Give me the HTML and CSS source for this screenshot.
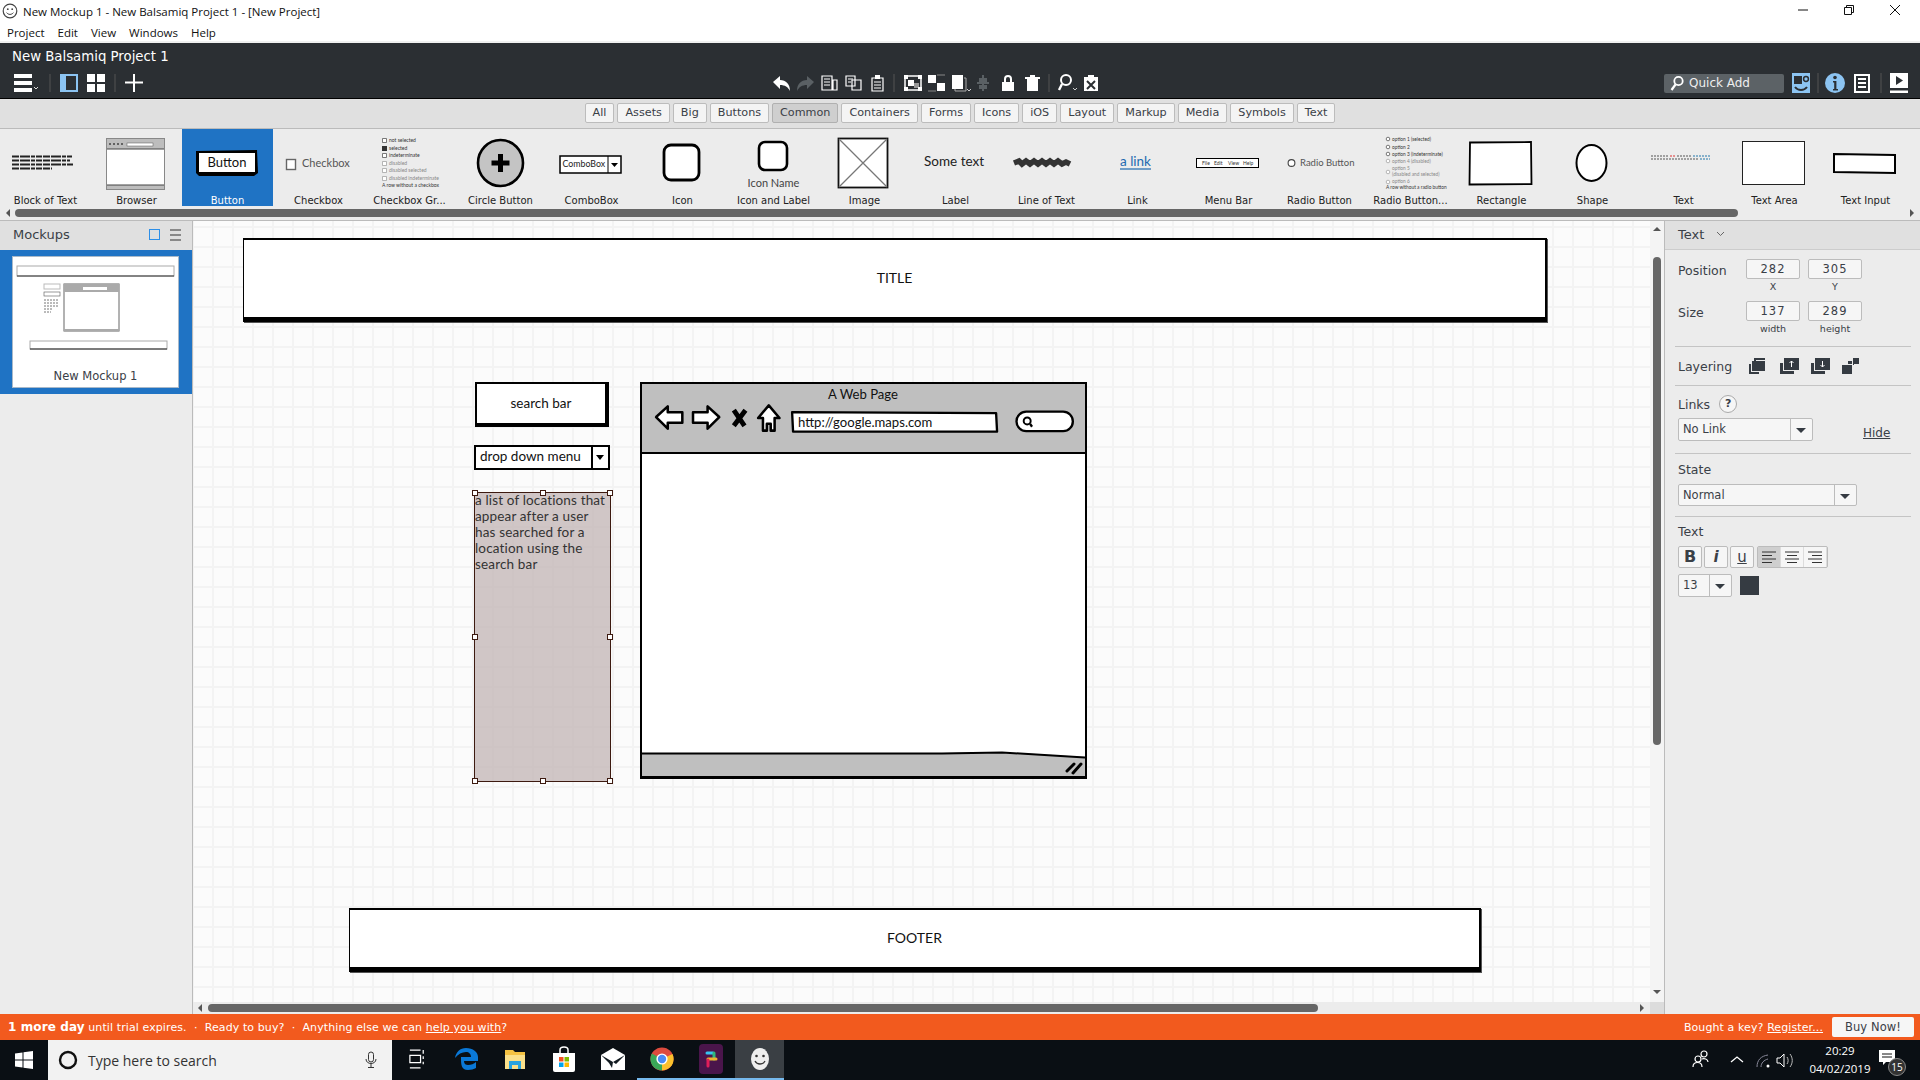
FILE: index.html
```html
<!DOCTYPE html>
<html lang="en">
<head>
    <meta charset="UTF-8">
    <meta name="viewport" content="width=device-width, initial-scale=1.0">
    <title>New Mockup 1 - New Balsamiq Project 1 - [New Project]</title>
    <link rel="stylesheet" href="styles.css">
</head>
<body>
<div class="app">

    <!-- Window title -->
    <div class="titlebar">
        <svg class="app-icon" width="16" height="16" viewBox="0 0 16 16"><circle cx="8" cy="8" r="6.8" fill="#fff" stroke="#444" stroke-width="1.2"/><circle cx="5.8" cy="6.2" r=".9" fill="#444"/><circle cx="10.2" cy="6.2" r=".9" fill="#444"/><path d="M4.6 9.6c1.6 2.4 5.2 2.4 6.8 0" fill="none" stroke="#444"/></svg>
        <span class="window-title">New Mockup 1 - New Balsamiq Project 1 - [New Project]</span>
        <div class="window-controls">
            <svg width="12" height="12" viewBox="0 0 12 12"><path d="M1 6h10" stroke="#111"/></svg>
            <svg width="12" height="12" viewBox="0 0 12 12"><path d="M1.5 3.5h7v7h-7zM3.5 3.5v-2h7v7h-2" fill="none" stroke="#111"/></svg>
            <svg width="12" height="12" viewBox="0 0 12 12"><path d="M1 1l10 10M11 1L1 11" stroke="#111"/></svg>
        </div>
    </div>
    <div class="menubar">
        <span>Project</span><span>Edit</span><span>View</span><span>Windows</span><span>Help</span>
    </div>

    <!-- Dark header -->
    <div class="header">
        <div class="project-name">New Balsamiq Project 1</div>
        <div class="toolbar">
            <svg class="tb-left" width="758" height="22" viewBox="0 0 758 22">
                <path d="M0 2h18v4H0zM0 9h18v4H0zM0 16h18v4H0z" fill="#fff"/>
                <path d="M20 15l2 2 2-2" fill="none" stroke="#ddd"/>
                <path d="M36 2v18" stroke="#555"/>
                <path d="M46 2h18v18H46z" fill="#8cc4f2"/><path d="M52 4h10v14H52z" fill="#2b2f33"/>
                <path d="M73 2h8v8h-8zM83 2h8v8h-8zM73 12h8v8h-8zM83 12h8v8h-8z" fill="#fff"/>
                <path d="M101 2v18" stroke="#555"/>
                <path d="M111 10.5h18M120 2v18" stroke="#fff" stroke-width="2"/>
            </svg>
            <svg class="tb-center" width="330" height="22" viewBox="0 0 330 22">
                <path d="M3 10l7-6v4c6 0 10 4 10 11-2-4-5-6-10-6v4z" fill="#fff"/>
                <path d="M44 10l-7-6v4c-6 0-10 4-10 11 2-4 5-6 10-6v4z" fill="#5a6064"/>
                <path d="M52 4h10v14H52zM63 8h4v10h-4z" fill="none" stroke="#fff" stroke-width="1.2"/><path d="M54 7h6M54 10h6M54 13h6" stroke="#fff"/>
                <path d="M76 4h9v10h-9zM82 8h9v10h-9z" fill="none" stroke="#fff" stroke-width="1.2"/><path d="M78 7h5M78 10h3" stroke="#fff"/>
                <path d="M102 6h11v13h-11z" fill="none" stroke="#fff" stroke-width="1.2"/><path d="M105 3h5v4h-5z" fill="#fff"/><path d="M104 10h7M104 13h7M104 16h7" stroke="#fff"/>
                <path d="M124 2v18" stroke="#555"/>
                <path d="M135 4h16v14h-16z" fill="none" stroke="#fff" stroke-width="1.5"/><path d="M138 8h6v6h-6z" fill="#fff"/><path d="M144 11h5v5h-5z" fill="#999"/>
                <path d="M134 3h4v4h-4zM148 3h4v4h-4zM134 15h4v4h-4zM148 15h4v4h-4z" fill="#fff"/>
                <path d="M158 3h8v8h-8zM167 11h8v8h-8z" fill="#fff"/><path d="M167 3h8M158 19h8" stroke="#888"/>
                <path d="M182 3h11v14h-11z" fill="#fff"/><path d="M194 6h2v13h-11v-2" fill="none" stroke="#aaa"/><path d="M197 17l2 2 2-2" fill="none" stroke="#ccc"/>
                <path d="M207 11h12M213 3v16" stroke="#5a6064" stroke-width="2"/><path d="M209 6h8v4h-8zM209 13h8v4h-8z" fill="#5a6064"/>
                <path d="M232 10h12v9h-12z" fill="#fff"/><path d="M235 10V7c0-4 6-4 6 0v3" fill="none" stroke="#fff" stroke-width="2"/>
                <path d="M257 7h11v12h-11zM255 5h15v2h-15zM260 3h5v2h-5z" fill="#fff"/>
                <path d="M279 2v18" stroke="#555"/>
                <circle cx="296" cy="8" r="5" fill="none" stroke="#fff" stroke-width="2"/><path d="M292 12l-3 6" stroke="#fff" stroke-width="2.4"/><path d="M303 16l2 2 2-2" fill="none" stroke="#ccc"/>
                <path d="M314 5h14v14h-14z" fill="#fff"/><path d="M318 3h6v3h-6z" fill="#fff"/><path d="M317 9l8 8M325 9l-8 8" stroke="#2b2f33" stroke-width="2"/>
            </svg>
            <div class="tb-right">
                <div class="quick-add">
                    <svg width="14" height="16" viewBox="0 0 14 16"><circle cx="8.5" cy="6" r="4.2" fill="none" stroke="#fff" stroke-width="1.8"/><path d="M5.5 9.5L1.5 15" stroke="#fff" stroke-width="2.2"/></svg>
                    <span>Quick Add</span>
                </div>
                <svg width="126" height="22" viewBox="0 0 126 22">
                    <path d="M0 1h18v20H0z" fill="#8cc4f2"/><path d="M2 4h8v8H2z" fill="#2b2f33"/><circle cx="14" cy="7" r="2.4" fill="none" stroke="#2b2f33" stroke-width="1.5"/><path d="M3 15c3 4 9 4 12 0" fill="none" stroke="#2b2f33" stroke-width="2"/>
                    <path d="M26 1v20" stroke="#555"/>
                    <circle cx="43" cy="11" r="10" fill="#8cc4f2"/><circle cx="43" cy="5.5" r="1.8" fill="#2b2f33"/><path d="M41 9h3.4v8H46v1.4h-5V17h1.2v-6.6H41z" fill="#2b2f33"/>
                    <path d="M63 3h14v17H63z" fill="none" stroke="#fff" stroke-width="2"/><path d="M66 7h8M66 11h8M66 15h8" stroke="#fff" stroke-width="2"/>
                    <path d="M89 1v20" stroke="#555"/>
                    <path d="M98 1h18v15H98z" fill="#fff"/><path d="M104 4l7 4.5-7 4.5z" fill="#2b2f33"/><path d="M98 18.5h18v2.5H98z" fill="#fff"/>
                </svg>
            </div>
        </div>
    </div>

    <!-- Library filter -->
    <div class="filterbar">
        <span class="tab">All</span>
        <span class="tab">Assets</span>
        <span class="tab">Big</span>
        <span class="tab">Buttons</span>
        <span class="tab tab-active">Common</span>
        <span class="tab">Containers</span>
        <span class="tab">Forms</span>
        <span class="tab">Icons</span>
        <span class="tab">iOS</span>
        <span class="tab">Layout</span>
        <span class="tab">Markup</span>
        <span class="tab">Media</span>
        <span class="tab">Symbols</span>
        <span class="tab">Text</span>
    </div>

    <!-- Control library -->
    <div class="palette">
        <div class="palette-row">
            <div class="palette-item">
                <svg class="thumb" viewBox="0 0 91 60"><path d="M12 25.5h60M12 29.5h58M12 33.5h61M12 37.5h40" stroke="#222" stroke-width="1.8" stroke-dasharray="7 1 10 1 4 1 6 1"/></svg>
                <div class="palette-label">Block of Text</div>
            </div>
            <div class="palette-item">
                <svg class="thumb" viewBox="0 0 91 60"><rect x="15.5" y="7.5" width="58" height="51" fill="#fff" stroke="#888"/><rect x="16" y="8" width="57" height="10" fill="#bdbdbd"/><rect x="36" y="12" width="26" height="3" fill="#fff" stroke="#555" stroke-width=".5"/><path d="M18 13h2M22 13h2M26 13h2M30 13h2" stroke="#444" stroke-width="1.4"/><rect x="16" y="54" width="57" height="4" fill="#bdbdbd"/><path d="M16 18h57M16 54h57" stroke="#444"/></svg>
                <div class="palette-label">Browser</div>
            </div>
            <div class="palette-item palette-selected">
                <svg class="thumb" viewBox="0 0 91 60"><path d="M14 20l61-1 1 23-4 3-55 0-3-3z" fill="#000"/><rect x="17" y="22" width="56" height="19" fill="#fff"/><text x="45" y="36" class="sk" font-size="13" text-anchor="middle" fill="#111">Button</text></svg>
                <div class="palette-label">Button</div>
            </div>
            <div class="palette-item">
                <svg class="thumb" viewBox="0 0 91 60"><rect x="13.5" y="28.5" width="9" height="10" fill="#fff" stroke="#666" stroke-width="1.4"/><text x="29" y="36" class="sk" font-size="11" fill="#555">Checkbox</text></svg>
                <div class="palette-label">Checkbox</div>
            </div>
            <div class="palette-item">
                <svg class="thumb" viewBox="0 0 91 60">
                    <g class="sk" font-size="5" fill="#333"><text x="25" y="11">not selected</text><text x="25" y="19">selected</text><text x="25" y="26">indeterminate</text></g>
                    <g class="sk" font-size="5" fill="#888"><text x="25" y="34">disabled</text><text x="25" y="41">disabled selected</text><text x="25" y="49">disabled indeterminate</text></g>
                    <text x="18" y="56" class="sk" font-size="5" fill="#333">A row without a checkbox</text>
                    <path d="M18.5 7.5h4v4h-4zM18.5 22.5h4v4h-4z" fill="#fff" stroke="#444" stroke-width=".7"/><path d="M18 15h5v5h-5z" fill="#333"/><path d="M18.5 30.5h4v4h-4zM18.5 37.5h4v4h-4zM18.5 45.5h4v4h-4z" fill="#fff" stroke="#999" stroke-width=".7"/>
                </svg>
                <div class="palette-label">Checkbox Gr...</div>
            </div>
            <div class="palette-item">
                <svg class="thumb" viewBox="0 0 91 60"><ellipse cx="45.5" cy="32" rx="22.5" ry="23" fill="#c4c4c4" stroke="#000" stroke-width="2.6"/><path d="M45.5 23v18M36.5 32h18" stroke="#000" stroke-width="5"/></svg>
                <div class="palette-label">Circle Button</div>
            </div>
            <div class="palette-item">
                <svg class="thumb" viewBox="0 0 91 60"><rect x="14" y="25" width="61" height="17" fill="#fff" stroke="#000" stroke-width="1.5"/><path d="M62 25v17" stroke="#000"/><path d="M65 32h7l-3.5 4z" fill="#000"/><text x="16.5" y="36" class="sk" font-size="8.8" fill="#222">ComboBox</text></svg>
                <div class="palette-label">ComboBox</div>
            </div>
            <div class="palette-item">
                <svg class="thumb" viewBox="0 0 91 60"><rect x="27" y="14" width="35" height="35" rx="7" fill="#fff" stroke="#000" stroke-width="2.8"/></svg>
                <div class="palette-label">Icon</div>
            </div>
            <div class="palette-item">
                <svg class="thumb" viewBox="0 0 91 60"><rect x="31" y="11" width="28" height="28" rx="6" fill="#fff" stroke="#000" stroke-width="2.6"/><text x="45.5" y="56" class="sk" font-size="11" text-anchor="middle" fill="#444">Icon Name</text></svg>
                <div class="palette-label">Icon and Label</div>
            </div>
            <div class="palette-item">
                <svg class="thumb" viewBox="0 0 91 60"><rect x="19.5" y="7.5" width="49" height="49" fill="#fff" stroke="#111" stroke-width="1.8"/><path d="M20 8l48 48M68 8L20 56" stroke="#777" stroke-width="1.3"/></svg>
                <div class="palette-label">Image</div>
            </div>
            <div class="palette-item">
                <svg class="thumb" viewBox="0 0 91 60"><text x="14" y="35" class="sk" font-size="13.5" fill="#222">Some text</text></svg>
                <div class="palette-label">Label</div>
            </div>
            <div class="palette-item">
                <svg class="thumb" viewBox="0 0 91 60"><path d="M13 32l5-2 3 3 4-3 4 3 4-3 4 3 4-3 4 3 4-3 4 3 4-3 4 3 4-2 4 2" fill="none" stroke="#333" stroke-width="5.5"/></svg>
                <div class="palette-label">Line of Text</div>
            </div>
            <div class="palette-item">
                <svg class="thumb" viewBox="0 0 91 60"><text x="28" y="35" class="sk" font-size="13.5" fill="#1f6ab0">a link</text><path d="M28 38h31" stroke="#1f6ab0" stroke-width="1.2"/></svg>
                <div class="palette-label">Link</div>
            </div>
            <div class="palette-item">
                <svg class="thumb" viewBox="0 0 91 60"><rect x="13.5" y="27.5" width="62" height="9" fill="#fff" stroke="#000"/><g class="sk" font-size="5" fill="#333"><text x="19" y="34">File</text><text x="31" y="34">Edit</text><text x="45" y="34">View</text><text x="60" y="34">Help</text></g></svg>
                <div class="palette-label">Menu Bar</div>
            </div>
            <div class="palette-item">
                <svg class="thumb" viewBox="0 0 91 60"><circle cx="17.5" cy="32" r="3.4" fill="#fff" stroke="#444" stroke-width="1.1"/><text x="26" y="35" class="sk" font-size="9.5" fill="#555">Radio Button</text></svg>
                <div class="palette-label">Radio Button</div>
            </div>
            <div class="palette-item">
                <svg class="thumb" viewBox="0 0 91 60">
                    <g class="sk" font-size="4.8" fill="#333"><text x="27" y="10">option 1 (selected)</text><text x="27" y="18">option 2</text><text x="27" y="25">option 3 (indeterminate)</text></g>
                    <g class="sk" font-size="4.8" fill="#888"><text x="27" y="32">option 4 (disabled)</text><text x="27" y="39">option 5</text><text x="27" y="45">(disabled and selected)</text><text x="27" y="52">option 6</text></g>
                    <text x="21" y="58" class="sk" font-size="4.8" fill="#333">A row without a radio button</text>
                    <g fill="#fff" stroke="#444" stroke-width=".7"><circle cx="23" cy="8" r="1.8"/><circle cx="23" cy="16" r="1.8"/><circle cx="23" cy="23" r="1.8"/></g><g fill="#fff" stroke="#999" stroke-width=".7"><circle cx="23" cy="30" r="1.8"/><circle cx="23" cy="41" r="1.8"/><circle cx="23" cy="51" r="1.8"/></g>
                </svg>
                <div class="palette-label">Radio Button...</div>
            </div>
            <div class="palette-item">
                <svg class="thumb" viewBox="0 0 91 60"><path d="M14 11.5l61-.5 .5 42-62 .5z" fill="#fff" stroke="#000" stroke-width="1.8"/></svg>
                <div class="palette-label">Rectangle</div>
            </div>
            <div class="palette-item">
                <svg class="thumb" viewBox="0 0 91 60"><ellipse cx="44.5" cy="32" rx="15" ry="18" fill="#fff" stroke="#000" stroke-width="2"/></svg>
                <div class="palette-label">Shape</div>
            </div>
            <div class="palette-item">
                <svg class="thumb" viewBox="0 0 91 60"><path d="M13 25h17" stroke="#555" stroke-dasharray="2 1"/><path d="M32 25h5" stroke="#d33" stroke-dasharray="2 1"/><path d="M39 25h14" stroke="#555" stroke-dasharray="2 1"/><path d="M55 25h18" stroke="#27a" stroke-dasharray="2 1"/><path d="M13 28h47" stroke="#555" stroke-dasharray="2 1"/><path d="M62 28h10" stroke="#27a" stroke-dasharray="2 1"/></svg>
                <div class="palette-label">Text</div>
            </div>
            <div class="palette-item">
                <svg class="thumb" viewBox="0 0 91 60"><rect x="13.5" y="10.5" width="62" height="43" fill="#fff" stroke="#222"/></svg>
                <div class="palette-label">Text Area</div>
            </div>
            <div class="palette-item">
                <svg class="thumb" viewBox="0 0 91 60"><path d="M14 23l61 1 0 18-61-1z" fill="#fff" stroke="#000" stroke-width="2"/></svg>
                <div class="palette-label">Text Input</div>
            </div>
        </div>
        <div class="palette-scroll">
            <i class="arrow-left"></i>
            <div class="palette-thumb"></div>
            <i class="arrow-right"></i>
        </div>
    </div>

    <!-- Main area -->
    <div class="main">
        <div class="left-panel">
            <div class="panel-head">
                <span>Mockups</span>
                <svg width="33" height="12" viewBox="0 0 33 12"><rect x=".5" y=".5" width="10" height="10" fill="none" stroke="#2d8fe8"/><path d="M21 1h11M21 6h11M21 11h11" stroke="#333"/></svg>
            </div>
            <div class="mockup-item">
                <div class="mockup-card">
                    <svg width="165" height="108" viewBox="0 0 165 108">
                        <rect x="4" y="9" width="157" height="10" fill="#fff" stroke="#aaa"/><path d="M4 19h157" stroke="#333"/>
                        <rect x="31" y="27" width="16" height="5" fill="#fff" stroke="#bbb"/><rect x="31" y="35" width="16" height="4" fill="#fff" stroke="#555" stroke-width=".6"/>
                        <path d="M31 43h15M31 46h15M31 49h15M31 52h9M31 55h7" stroke="#777" stroke-dasharray="2 1"/>
                        <rect x="51" y="27" width="55" height="47" fill="#fff" stroke="#666"/><rect x="51" y="27" width="55" height="8" fill="#aaa"/><rect x="70" y="30" width="24" height="3" fill="#fff"/><rect x="51" y="72" width="55" height="2" fill="#aaa"/>
                        <rect x="17" y="84" width="137" height="8" fill="#fff" stroke="#aaa"/><path d="M17 92h137" stroke="#222"/>
                    </svg>
                    <div class="mockup-name">New Mockup 1</div>
                </div>
            </div>
        </div>

        <div class="center">
            <div class="center-top">
                <div class="canvas">
                    <div class="wf-box wf-title">TITLE</div>
                    <div class="wf-button">search bar</div>
                    <div class="wf-combo">
                        <span class="wf-combo-text">drop down menu</span>
                        <span class="wf-combo-arrow"></span>
                    </div>
                    <div class="wf-selected">
                        <div class="wf-selected-text">a list of locations that<br>appear after a user<br>has searched for a<br>location using the<br>search bar</div>
                        <i class="handle h-tl"></i><i class="handle h-tc"></i><i class="handle h-tr"></i>
                        <i class="handle h-ml"></i><i class="handle h-mr"></i>
                        <i class="handle h-bl"></i><i class="handle h-bc"></i><i class="handle h-br"></i>
                    </div>
                    <div class="wf-browser">
                        <svg class="wf-browser-head" width="443" height="70" viewBox="0 0 443 70">
                            <g transform="translate(0 1)">
                                <text x="221" y="14" class="sk" font-size="13.5" text-anchor="middle" fill="#111">A Web Page</text>
                                <g fill="#fff" stroke="#000" stroke-width="2.6" stroke-linejoin="round">
                                    <path d="M8 33l12-11v6h15v11H20v6z"/>
                                    <path d="M73 33L61 22v6H46v11h15v6z"/>
                                    <path d="M124 21l11 13h-5v13h-4v-7h-4v7h-4V34h-5z"/>
                                </g>
                                <path d="M88 26l11 16M100 26L88 42" stroke="#000" stroke-width="5"/>
                                <path d="M148 28l210 1 1 19-210 0z" fill="#fff" stroke="#000" stroke-width="2.4" stroke-linejoin="round"/>
                                <text x="154" y="43" class="sk" font-size="13.5" fill="#111">http://google.maps.com</text>
                                <rect x="379" y="27.5" width="58" height="20" rx="10" fill="#fff" stroke="#000" stroke-width="2.4"/>
                                <circle cx="390" cy="37" r="3.6" fill="none" stroke="#000" stroke-width="2"/><path d="M393 40l2 3" stroke="#000" stroke-width="2.4"/>
                            </g>
                        </svg>
                        <div class="wf-browser-body"></div>
                        <svg class="wf-browser-foot" width="443" height="23" viewBox="0 0 443 23">
                            <path d="M0 0l300 0 60-1 83 5v19H0z" fill="#bfbfbf"/>
                            <path d="M0 .5l300 0 60-1 83 5" fill="none" stroke="#000" stroke-width="2"/>
                            <path d="M425 18l7-7M431 20l8-9" stroke="#000" stroke-width="3" stroke-linecap="round"/>
                        </svg>
                    </div>
                    <div class="wf-box wf-footer">FOOTER</div>
                </div>
                <div class="vscroll">
                    <i class="arrow-up"></i>
                    <div class="vscroll-thumb"></div>
                    <i class="arrow-down"></i>
                </div>
            </div>
            <div class="hscroll">
                <i class="arrow-left"></i>
                <div class="hscroll-thumb"></div>
                <i class="arrow-right"></i>
                <div class="hscroll-corner"></div>
            </div>
        </div>

        <!-- Properties -->
        <div class="right-panel">
            <div class="panel-head prop-head">
                <span>Text</span>
                <svg width="9" height="6" viewBox="0 0 9 6"><path d="M1 1l3.5 3.5L8 1" fill="none" stroke="#666"/></svg>
            </div>
            <div class="prop-section prop-geometry">
                <span class="prop-label">Position</span>
                <span class="num-input">282</span>
                <span class="num-input">305</span>
                <span></span><span class="sub-label">X</span><span class="sub-label">Y</span>
                <span class="prop-label">Size</span>
                <span class="num-input">137</span>
                <span class="num-input">289</span>
                <span></span><span class="sub-label">width</span><span class="sub-label">height</span>
            </div>
            <div class="prop-section prop-layering">
                <span class="prop-label layering-label">Layering</span>
                <svg width="110" height="16" viewBox="0 0 110 16">
                    <path d="M3 3h13v10H3z" fill="#353b42"/><path d="M5 0h11v2H7v1H5zM0 6h2v8h8v2H0z" fill="#353b42"/>
                    <path d="M35 0h15v12H35z" fill="#353b42"/><path d="M31 5h3v8h11v3H31z" fill="#353b42"/><path d="M42.5 3v6M40.5 5l2-2 2 2" fill="none" stroke="#fff"/>
                    <path d="M66 0h15v12H66z" fill="#353b42"/><path d="M62 5h3v8h11v3H62z" fill="#353b42"/><path d="M73.5 3v6M71.5 7l2 2 2-2" fill="none" stroke="#fff"/>
                    <path d="M93 7h10v9H93z" fill="#353b42"/><path d="M104 0h6v6h-5v1h-1zM99 3h4v3h-4z" fill="#353b42"/>
                </svg>
            </div>
            <div class="prop-section prop-links">
                <div class="links-head">
                    <span class="prop-label">Links</span>
                    <span class="help">?</span>
                </div>
                <div class="links-row">
                    <div class="select select-link"><span class="select-text">No Link</span><span class="select-arrow"></span></div>
                    <span class="hide-link">Hide</span>
                </div>
            </div>
            <div class="prop-section prop-state">
                <div class="prop-label prop-title">State</div>
                <div class="select select-state"><span class="select-text">Normal</span><span class="select-arrow"></span></div>
            </div>
            <div class="prop-section prop-text">
                <div class="prop-label prop-title">Text</div>
                <div class="format-row">
                    <span class="format-btn fmt-b">B</span>
                    <span class="format-btn fmt-i">i</span>
                    <span class="format-btn fmt-u">u</span>
                    <div class="align-group">
                        <span class="align-btn align-on"><svg width="16" height="13" viewBox="0 0 16 13"><path d="M1 1h14M1 4.5h10M1 8h14M1 11.5h10" stroke="#333"/></svg></span>
                        <span class="align-btn"><svg width="16" height="13" viewBox="0 0 16 13"><path d="M1 1h14M3 4.5h10M1 8h14M3 11.5h10" stroke="#333"/></svg></span>
                        <span class="align-btn"><svg width="16" height="13" viewBox="0 0 16 13"><path d="M1 1h14M5 4.5h10M1 8h14M5 11.5h10" stroke="#333"/></svg></span>
                    </div>
                </div>
                <div class="font-row">
                    <div class="select select-size"><span class="select-text">13</span><span class="select-arrow"></span></div>
                    <span class="swatch"></span>
                </div>
            </div>
        </div>
    </div>

    <!-- Trial notice -->
    <div class="trialbar">
        <div class="trial-text"><b>1 more day</b> until trial expires. &nbsp;&middot;&nbsp; Ready to buy? &nbsp;&middot;&nbsp; Anything else we can <u>help you with</u>?</div>
        <div class="trial-right">
            <span>Bought a key? <u>Register...</u></span>
            <span class="buy-btn">Buy Now!</span>
        </div>
    </div>

    <!-- Windows taskbar -->
    <div class="taskbar">
        <div class="start">
            <svg width="18" height="18" viewBox="0 0 18 18"><path d="M0 2.5l7.5-1v7H0zM8.5 1.3L18 0v8.5H8.5zM0 9.5h7.5v7l-7.5-1zM8.5 9.5H18V18l-9.5-1.3z" fill="#fff"/></svg>
        </div>
        <div class="search-box">
            <svg width="20" height="20" viewBox="0 0 20 20"><circle cx="10" cy="10" r="8" fill="none" stroke="#111" stroke-width="2.4"/></svg>
            <span class="search-text">Type here to search</span>
            <svg class="mic" width="12" height="18" viewBox="0 0 12 18"><rect x="3.5" y="1" width="5" height="10" rx="2.5" fill="none" stroke="#333"/><path d="M1 8c0 6 10 6 10 0M6 13v3M3 16.5h6" fill="none" stroke="#333"/></svg>
        </div>
        <div class="task-icon">
            <svg width="16" height="20" viewBox="0 0 18 22"><path d="M1 1h12M1 21h12M1 7h12v8H1zM16 1v4M16 8v3M16 14v3" fill="none" stroke="#fff" stroke-width="1.4"/></svg>
        </div>
        <div class="task-icon">
            <svg width="24" height="24" viewBox="0 0 24 24"><path d="M12 1C6 1 2 5 1 11c3-4 7-6 11-6 3 0 5 2 5 5H7c0 7 0 13 7 13 3 0 6-1 8-2v-6c-2 2-5 3-8 3-2 0-4-1-4-4h14v-4C24 5 19 1 12 1z" fill="#0a78d7"/></svg>
        </div>
        <div class="task-icon">
            <svg width="24" height="24" viewBox="0 0 24 24"><path d="M2 3h8l2 2h10v17H2z" fill="#f5c242"/><path d="M2 8h20v14H2z" fill="#fbe08a"/><path d="M6 14h12v8h-3v-4H9v4H6z" fill="#29a3e0"/></svg>
        </div>
        <div class="task-icon">
            <svg width="24" height="26" viewBox="0 0 24 26"><path d="M8 7V4c0-4 8-4 8 0v3" fill="none" stroke="#fff" stroke-width="1.5"/><path d="M1 7h22v17a2 2 0 0 1-2 2H3a2 2 0 0 1-2-2z" fill="#fff"/><path d="M7 11h4.5v4.5H7z" fill="#f25022"/><path d="M12.5 11H17v4.5h-4.5z" fill="#7fba00"/><path d="M7 16.5h4.5V21H7z" fill="#00a4ef"/><path d="M12.5 16.5H17V21h-4.5z" fill="#ffb900"/></svg>
        </div>
        <div class="task-icon">
            <svg width="24" height="22" viewBox="0 0 24 22"><path d="M0 7L12 0l12 7v15H0z" fill="#fff"/><path d="M0 7l12 7L24 7l-9 9-3-2-1 6-3-5z" fill="#111a20"/></svg>
        </div>
        <div class="task-icon task-open">
            <svg width="24" height="24" viewBox="0 0 24 24"><circle cx="12" cy="12" r="11.5" fill="#dd4b3e"/><path d="M12 12L22.5 7A11.5 11.5 0 0 1 12 23.5z" fill="#fbc02d"/><path d="M12 12L12 23.5A11.5 11.5 0 0 1 1.8 6.5z" fill="#3aa757"/><circle cx="12" cy="12" r="5.6" fill="#fff"/><circle cx="12" cy="12" r="4.2" fill="#4a8bf5"/></svg>
        </div>
        <div class="task-icon task-open">
            <svg width="24" height="30" viewBox="0 0 24 30"><rect width="24" height="30" rx="4" fill="#4a154b"/><path d="M8 9h6" stroke="#36c5f0" stroke-width="3" stroke-linecap="round"/><path d="M15 9v6" stroke="#2eb67d" stroke-width="3" stroke-linecap="round"/><path d="M9 15h8" stroke="#ecb22e" stroke-width="3" stroke-linecap="round"/><path d="M9 16v6" stroke="#e01e5a" stroke-width="3" stroke-linecap="round"/></svg>
        </div>
        <div class="task-icon task-open task-active">
            <svg width="20" height="24" viewBox="0 0 20 24"><ellipse cx="10" cy="12" rx="9" ry="11" fill="#eee"/><circle cx="6.5" cy="9" r="1.3" fill="#333"/><circle cx="13.5" cy="9" r="1.3" fill="#333"/><path d="M5 14c2 4 8 4 10 0" fill="none" stroke="#333" stroke-width="1.3"/></svg>
        </div>
        <div class="tray">
            <svg width="104" height="20" viewBox="0 0 104 20">
                <circle cx="6" cy="9" r="3" fill="none" stroke="#fff" stroke-width="1.2"/><circle cx="12" cy="4" r="3" fill="none" stroke="#fff" stroke-width="1.2"/><path d="M1 17c0-6 9-6 9 0M10 9c2-1 6 0 6 3" fill="none" stroke="#fff" stroke-width="1.2"/>
                <path d="M39 12l6-5 6 5" fill="none" stroke="#fff" stroke-width="1.3"/>
                <path d="M65 17c0-7 4-11 11-12M69 17c0-4 3-7 7-8" fill="none" stroke="#889" /><circle cx="76" cy="16" r="1.5" fill="#fff"/>
                <path d="M85 8h3l4-4v13l-4-4h-3z" fill="none" stroke="#fff"/><path d="M95 7c1.5 2 1.5 5 0 7M98 4c3 4 3 9 0 13" fill="none" stroke="#bbb"/>
            </svg>
            <div class="clock"><div>20:29</div><div>04/02/2019</div></div>
            <div class="notify">
                <svg width="18" height="16" viewBox="0 0 18 16"><path d="M1 1h16v12H8l-3 3v-3H1z" fill="#fff"/><path d="M4 5h10M4 8h10" stroke="#111"/></svg>
                <span class="notify-badge">15</span>
            </div>
        </div>
    </div>
</div>
</body>
</html>
```

FILE: styles.css
```css
* {
    box-sizing: border-box;
}
body {
    margin: 0;
    font-family: "DejaVu Sans", sans-serif;
    color: #3a4047;
    background: #ececec;
    overflow: hidden;
}
.sk {
    font-family: "Lato", sans-serif;
}
.app {
    width: 1920px;
    height: 1080px;
    display: flex;
    flex-direction: column;
    overflow: hidden;
}

/* window chrome */
.titlebar {
    height: 22px;
    display: flex;
    align-items: center;
    background: #fff;
    padding-left: 2px;
    font-family: "Open Sans", sans-serif;
    font-size: 11.5px;
    color: #111;
}
.window-title {
    margin-left: 5px;
}
.window-controls {
    margin-left: auto;
    display: flex;
    gap: 34px;
    padding-right: 19px;
    margin-top: -3px;
}
.menubar {
    height: 21px;
    display: flex;
    align-items: center;
    gap: 13px;
    padding: 2px 0 0 7px;
    background: #fff;
    font-family: "Open Sans", sans-serif;
    font-size: 11.5px;
    color: #111;
    border-bottom: 2px solid #f0f0f0;
}

/* dark header */
.header {
    height: 56px;
    background: #2b2f33;
    border-bottom: 1px solid #000;
    color: #fff;
}
.project-name {
    font-size: 13.3px;
    line-height: 16px;
    padding: 6px 0 0 12px;
}
.toolbar {
    display: flex;
    align-items: center;
    height: 22px;
    margin-top: 7px;
    padding-left: 14px;
}
.tb-left {
    flex: none;
}
.tb-center {
    flex: none;
    margin-left: -2px;
}
.tb-right {
    margin-left: auto;
    display: flex;
    align-items: center;
    gap: 8px;
    padding-right: 2px;
}
.quick-add {
    width: 120px;
    height: 19px;
    background: #5c6266;
    border-radius: 2px;
    display: flex;
    align-items: center;
    gap: 5px;
    padding-left: 6px;
    font-size: 12px;
    color: #eee;
}

/* filter tabs */
.filterbar {
    height: 30px;
    background: #e0e0e0;
    border-bottom: 1px solid #bbb;
    display: flex;
    justify-content: center;
    align-items: center;
    gap: 3px;
    padding-bottom: 1px;
}
.tab {
    height: 20px;
    line-height: 18px;
    padding: 0 7px;
    font-size: 11.2px;
    color: #3a4047;
    background: #f4f4f4;
    border: 1px solid #bcbcbc;
    border-radius: 2px;
}
.tab-active {
    background: #cfcfcf;
    border-color: #b0b0b0;
}

/* library */
.palette {
    height: 92px;
    background: #ececec;
    border-bottom: 1px solid #bbb;
    flex: none;
}
.palette-row {
    display: flex;
    height: 77px;
}
.palette-item {
    width: 91px;
    flex: none;
    text-align: center;
    color: #222;
}
.thumb {
    display: block;
    width: 91px;
    height: 60px;
    margin-top: 2px;
}
.palette-label {
    font-size: 10px;
    line-height: 14px;
    margin-top: 3px;
    white-space: nowrap;
}
.palette-selected {
    background: #1f73c4;
}
.palette-selected .palette-label {
    color: #fff;
}
.palette-scroll {
    height: 14px;
    display: flex;
    align-items: center;
    padding: 0 6px;
}
.palette-thumb {
    width: 1723px;
    height: 8px;
    margin-left: 5px;
    background: #666;
    border-radius: 4px;
}
.palette-scroll .arrow-right {
    margin-left: auto;
}
.arrow-left, .arrow-right, .arrow-up, .arrow-down {
    display: block;
    width: 0;
    height: 0;
    flex: none;
    border-style: solid;
}
.arrow-left {
    border-width: 4px 4px 4px 0;
    border-color: transparent #555 transparent transparent;
}
.arrow-right {
    border-width: 4px 0 4px 4px;
    border-color: transparent transparent transparent #555;
}
.arrow-up {
    border-width: 0 4px 4px 4px;
    border-color: transparent transparent #555 transparent;
}
.arrow-down {
    border-width: 4px 4px 0 4px;
    border-color: #555 transparent transparent transparent;
}

/* main area */
.main {
    flex: 1;
    display: flex;
    min-height: 0;
}
.panel-head {
    height: 29px;
    background: #e0e0e0;
    display: flex;
    align-items: center;
    justify-content: space-between;
    padding: 0 10px 2px 13px;
    font-size: 13px;
}
.left-panel {
    width: 193px;
    flex: none;
    border-right: 1px solid #bbb;
    background: #ececec;
}
.mockup-item {
    background: #1f73c4;
    height: 144px;
    padding: 6px 13px 6px 12px;
}
.mockup-card {
    height: 132px;
    background: #fff;
    border: 1px solid #a9b9c9;
    text-align: center;
    font-size: 11.5px;
    overflow: hidden;
}
.mockup-card svg {
    display: block;
}
.mockup-name {
    margin-top: 4px;
    line-height: 14px;
}
.center {
    flex: 1;
    min-width: 0;
    display: flex;
    flex-direction: column;
}
.center-top {
    flex: 1;
    display: flex;
    min-height: 0;
}
.canvas {
    flex: 1;
    position: relative;
    background-color: #fbfbfb;
    background-image:
        linear-gradient(to right, #f3f3f3 2px, transparent 2px),
        linear-gradient(to bottom, #f3f3f3 2px, transparent 2px);
    background-size: 20px 20px;
    background-position: 19px 5px;
    overflow: hidden;
    font-family: "Lato", sans-serif;
    color: #111;
}
.vscroll {
    width: 14px;
    flex: none;
    background: #f4f4f4;
    display: flex;
    flex-direction: column;
    align-items: center;
    padding-top: 6px;
}
.vscroll-thumb {
    width: 8px;
    height: 488px;
    margin-top: 26px;
    background: #666;
    border-radius: 4px;
}
.vscroll .arrow-down {
    margin-top: auto;
    margin-bottom: 8px;
}
.hscroll {
    height: 12px;
    flex: none;
    background: #ececec;
    display: flex;
    align-items: center;
    padding-left: 5px;
}
.hscroll-thumb {
    width: 1110px;
    height: 8px;
    margin-left: 6px;
    background: #666;
    border-radius: 4px;
}
.hscroll .arrow-right {
    margin-left: auto;
    margin-right: 6px;
}
.hscroll-corner {
    width: 14px;
    height: 12px;
    background: #dcdcdc;
}

/* wireframe widgets, placed on the free canvas */
.wf-box {
    position: absolute;
    background: #fff;
    border-style: solid;
    border-color: #000;
    border-width: 2px 2px 5px 1px;
    box-shadow: 1px 1px 0 #555;
    display: flex;
    align-items: center;
    justify-content: center;
    font-size: 14px;
}
.wf-title {
    left: 50px;
    top: 17px;
    width: 1304px;
    height: 84px;
    padding-bottom: 3px;
}
.wf-footer {
    left: 156px;
    top: 687px;
    width: 1132px;
    height: 64px;
    padding-bottom: 3px;
}
.wf-button {
    position: absolute;
    left: 282px;
    top: 161px;
    width: 134px;
    height: 45px;
    background: #fff;
    border-style: solid;
    border-color: #000;
    border-width: 2px 4px 4px 2px;
    display: flex;
    align-items: center;
    justify-content: center;
    font-size: 13.5px;
    padding-bottom: 2px;
}
.wf-combo {
    position: absolute;
    left: 281px;
    top: 224px;
    width: 136px;
    height: 25px;
    background: #fff;
    border: 2px solid #000;
    display: flex;
    font-size: 13.5px;
}
.wf-combo-text {
    flex: 1;
    line-height: 19px;
    padding-left: 4px;
}
.wf-combo-arrow {
    width: 17px;
    border-left: 2px solid #000;
    position: relative;
}
.wf-combo-arrow::after {
    content: "";
    position: absolute;
    left: 3px;
    top: 8px;
    border-style: solid;
    border-width: 5px 4px 0 4px;
    border-color: #000 transparent transparent transparent;
}
.wf-selected {
    position: absolute;
    left: 281px;
    top: 271px;
    width: 137px;
    height: 290px;
    background: rgba(190, 175, 175, .7);
    border: 1px solid #3d1a10;
    font-size: 13.5px;
    line-height: 16px;
    color: #333;
}
.wf-selected-text {
    letter-spacing: .15px;
    margin-top: -1px;
    white-space: nowrap;
}
.handle {
    position: absolute;
    width: 6px;
    height: 6px;
    background: #fff;
    border: 1px solid #3d1a10;
}
.h-tl { left: -3px; top: -3px; }
.h-tc { left: 65px; top: -3px; }
.h-tr { right: -3px; top: -3px; }
.h-ml { left: -3px; top: 141px; }
.h-mr { right: -3px; top: 141px; }
.h-bl { left: -3px; bottom: -3px; }
.h-bc { left: 65px; bottom: -3px; }
.h-br { right: -3px; bottom: -3px; }
.wf-browser {
    position: absolute;
    left: 447px;
    top: 161px;
    width: 447px;
    height: 397px;
    border: 2px solid #000;
    border-bottom-width: 3px;
    background: #fff;
    display: flex;
    flex-direction: column;
}
.wf-browser-head {
    display: block;
    flex: none;
    background: #bfbfbf;
    border-bottom: 2px solid #000;
}
.wf-browser-body {
    flex: 1;
    background: #fff;
}
.wf-browser-foot {
    display: block;
    flex: none;
    overflow: visible;
}

/* properties */
.right-panel {
    width: 256px;
    flex: none;
    border-left: 1px solid #bbb;
    background: #ececec;
    font-size: 11.5px;
}
.prop-head {
    justify-content: flex-start;
    gap: 12px;
    height: 29px;
    padding-left: 13px;
    border-bottom: 1px solid #ccc;
}
.prop-section {
    margin: 0 9px 0 10px;
    padding-left: 3px;
    border-bottom: 1px solid #c4c4c4;
}
.prop-label {
    font-size: 12.5px;
}
.prop-geometry {
    display: grid;
    grid-template-columns: 60px 54px 54px;
    grid-template-rows: 20px 22px 20px 17px;
    column-gap: 8px;
    align-items: center;
    padding-top: 9px;
    padding-bottom: 8px;
}
.prop-geometry .prop-label {
    padding-top: 3px;
}
.num-input {
    height: 20px;
    line-height: 18px;
    background: #f6f6f6;
    border: 1px solid #bcbcbc;
    border-radius: 2px;
    text-align: center;
    letter-spacing: 1px;
}
.sub-label {
    align-self: start;
    text-align: center;
    font-size: 9.5px;
    line-height: 14px;
    margin-top: 1px;
}
.prop-layering {
    display: flex;
    align-items: center;
    height: 39px;
}
.layering-label {
    width: 71px;
}
.prop-links {
    height: 68px;
    padding-top: 8px;
}
.links-head {
    display: flex;
    align-items: center;
    gap: 9px;
    height: 20px;
    margin-bottom: 4px;
}
.help {
    width: 18px;
    height: 18px;
    border: 1px solid #aaa;
    border-radius: 50%;
    background: #f6f6f6;
    text-align: center;
    line-height: 16px;
    font-size: 11px;
    font-weight: bold;
}
.links-row {
    display: flex;
    align-items: flex-end;
}
.hide-link {
    margin-left: 50px;
    text-decoration: underline;
    font-size: 12px;
    line-height: 16px;
}
.select {
    display: flex;
    height: 23px;
    background: #f6f6f6;
    border: 1px solid #bcbcbc;
    border-radius: 2px;
}
.select-link {
    width: 135px;
}
.select-state {
    width: 179px;
    height: 22px;
}
.select-size {
    width: 54px;
}
.select-text {
    flex: 1;
    line-height: 20px;
    padding-left: 4px;
}
.select-arrow {
    width: 22px;
    border-left: 1px solid #bcbcbc;
    position: relative;
}
.select-arrow::after {
    content: "";
    position: absolute;
    left: 5px;
    top: 9px;
    border-style: solid;
    border-width: 5px 5px 0 5px;
    border-color: #353b42 transparent transparent transparent;
}
.prop-state {
    height: 63px;
    padding-top: 7px;
}
.prop-title {
    height: 18px;
    line-height: 18px;
    margin-bottom: 5px;
}
.prop-text {
    padding-top: 6px;
    border-bottom: 0;
}
.format-row {
    display: flex;
    gap: 2px;
    height: 22px;
    margin-bottom: 6px;
}
.format-btn {
    width: 24px;
    background: #f6f6f6;
    border: 1px solid #bcbcbc;
    border-radius: 2px;
    text-align: center;
    line-height: 20px;
    font-size: 15px;
}
.fmt-b {
    font-weight: bold;
    font-size: 16px;
}
.fmt-i {
    font-style: italic;
    font-weight: bold;
}
.fmt-u {
    text-decoration: underline;
}
.align-group {
    display: flex;
    margin-left: 1px;
    border: 1px solid #bcbcbc;
    border-radius: 2px;
}
.align-btn {
    width: 23px;
    display: flex;
    align-items: center;
    justify-content: center;
    background: #f6f6f6;
    border-right: 1px solid #dcdcdc;
}
.align-on {
    background: #cfcfcf;
}
.font-row {
    display: flex;
    align-items: center;
    gap: 8px;
}
.swatch {
    width: 19px;
    height: 19px;
    background: #353b42;
}

/* trial notice */
.trialbar {
    height: 26px;
    flex: none;
    background: #f25a1e;
    color: #fff;
    display: flex;
    align-items: center;
    justify-content: space-between;
    padding: 0 6px 0 8px;
    font-size: 11px;
    letter-spacing: .1px;
}
.trial-text b {
    font-size: 12px;
}
.trial-right {
    display: flex;
    align-items: center;
    gap: 9px;
}
.buy-btn {
    width: 82px;
    height: 20px;
    background: #f6f6f6;
    color: #3a4047;
    border-radius: 2px;
    text-align: center;
    line-height: 20px;
    font-size: 11.5px;
}

/* taskbar */
.taskbar {
    height: 40px;
    flex: none;
    background: #0a0f14;
    display: flex;
    align-items: center;
    color: #fff;
    font-family: "Open Sans", sans-serif;
}
.start {
    width: 48px;
    display: flex;
    justify-content: center;
}
.search-box {
    width: 344px;
    height: 40px;
    background: #f2f2f2;
    color: #333;
    display: flex;
    align-items: center;
    padding: 0 15px 0 10px;
    font-size: 14px;
}
.search-text {
    margin-left: 10px;
}
.mic {
    margin-left: auto;
}
.task-icon {
    width: 49px;
    height: 40px;
    display: flex;
    align-items: center;
    justify-content: center;
    border-bottom: 2px solid transparent;
}
.task-open {
    border-bottom-color: #76b9ed;
}
.task-active {
    background: #3a3f44;
}
.tray {
    margin-left: auto;
    display: flex;
    align-items: center;
    height: 40px;
    padding-right: 18px;
}
.clock {
    width: 80px;
    margin-left: 4px;
    text-align: center;
    font-size: 11.5px;
    line-height: 18px;
}
.notify {
    position: relative;
    margin-left: -2px;
    width: 24px;
    height: 24px;
}
.notify-badge {
    position: absolute;
    right: -4px;
    bottom: -4px;
    width: 18px;
    height: 18px;
    border-radius: 50%;
    background: #333;
    border: 1px solid #888;
    text-align: center;
    font-size: 10px;
    line-height: 16px;
}
```
